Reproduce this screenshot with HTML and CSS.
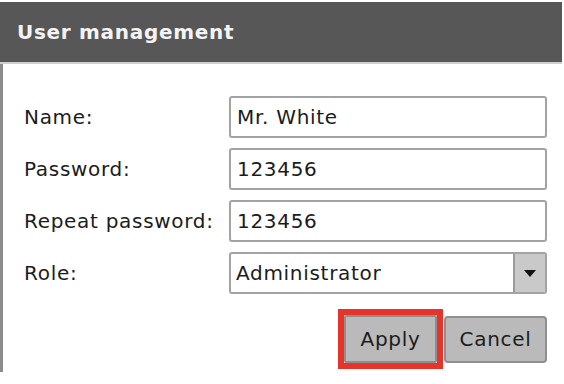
FILE: index.html
```html
<!DOCTYPE html>
<html>
<head>
<meta charset="utf-8">
<link rel="stylesheet" href="styles.css">
</head>
<body>
<div class="dialog">
  <div class="header">User management</div>
  <div class="body">
    <div class="form">
      <label class="label">Name:</label>
      <div class="field">Mr. White</div>
      <label class="label">Password:</label>
      <div class="field">123456</div>
      <label class="label">Repeat password:</label>
      <div class="field">123456</div>
      <label class="label">Role:</label>
      <div class="field select">
        <span class="select-value">Administrator</span>
        <span class="select-btn"><svg width="12" height="7" viewBox="0 0 12 7"><path d="M0 0H12L6 7Z" fill="#111"/></svg></span>
      </div>
    </div>
    <div class="buttons">
      <div class="highlight"><div class="btn btn-apply">Apply</div></div>
      <div class="btn">Cancel</div>
    </div>
  </div>
</div>
</body>
</html>
```
FILE: styles.css
```css
html, body {
  margin: 0;
  padding: 0;
  background: #ffffff;
}
body {
  font-family: "DejaVu Sans", Verdana, sans-serif;
  font-size: 20px;
  letter-spacing: 0.7px;
  color: #1c1c1c;
}
.dialog {
  width: 562px;
  margin-top: 2px;
}
.header {
  background: #575757;
  color: #f4f4f4;
  font-weight: bold;
  display: flex;
  align-items: center;
  padding-left: 17px;
  border-bottom: 2px solid #cfcfcf;
  box-sizing: border-box;
  height: 62px;
}
.body {
  border-left: 3px solid #8c8c8c;
  height: 308px;
  box-sizing: border-box;
  padding: 32px 15px 0 21px;
}
.form {
  display: grid;
  grid-template-columns: 205px 1fr;
  row-gap: 10px;
  align-items: center;
}
.field {
  height: 42px;
  box-sizing: border-box;
  border: 2px solid #a3a3a3;
  border-radius: 3px;
  padding: 0 6px;
  display: flex;
  align-items: center;
  background: #fff;
}
.select {
  padding: 0 0 0 5px;
  justify-content: space-between;
  overflow: hidden;
}
.select-btn {
  width: 30px;
  height: 100%;
  background: #c9c9c9;
  border-left: 2px solid #9b9b9b;
  display: flex;
  align-items: center;
  justify-content: center;
}
.buttons {
  display: flex;
  justify-content: flex-end;
  align-items: center;
  gap: 1px;
  margin-top: 15px;
}
.highlight {
  border: 6px solid #e6342a;
}
.btn {
  height: 47px;
  box-sizing: border-box;
  border: 2px solid #8f8f8f;
  border-radius: 4px;
  background: #bababa;
  display: flex;
  align-items: center;
  justify-content: center;
  width: 103px;
}
.btn-apply {
  width: 93px;
  height: 48px;
  border-radius: 2px;
}
```
